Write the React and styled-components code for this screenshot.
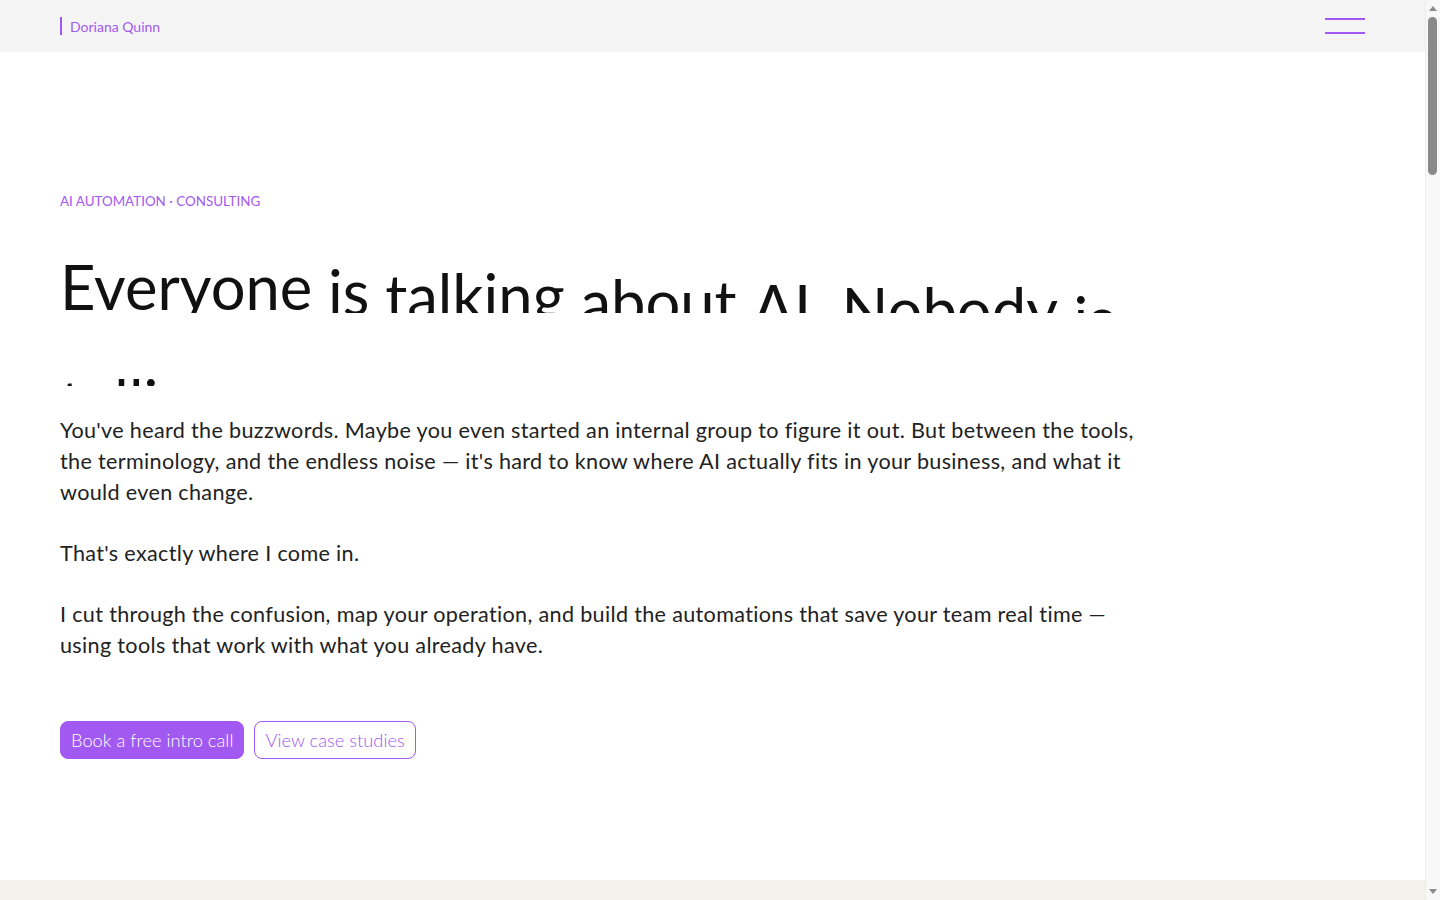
import styled, { createGlobalStyle } from "styled-components";

const GlobalStyle = createGlobalStyle`
    * {
        box-sizing: border-box;
    }

    html, body {
        margin: 0;
        padding: 0;
        background: #fff;
    }

    body {
        font-family: Lato, "Open Sans", sans-serif;
        color: #1a1a1a;
    }
`

const purple = "#a259f2";

const Page = styled.div`
    width: calc(100% - 15px);
`

const Nav = styled.header`
    height: 52px;
    background: #f5f5f5;
    display: flex;
    align-items: center;
    justify-content: space-between;
    padding: 0 60px;
`

const Brand = styled.a`
    display: flex;
    align-items: center;
    height: 18px;
    border-left: 2px solid ${purple};
    padding-left: 8px;
    color: ${purple};
    font-size: 14px;
    font-weight: 400;
    text-decoration: none;
`

const Burger = styled.button`
    width: 40px;
    height: 16px;
    padding: 0;
    border: none;
    background: transparent;
    display: flex;
    flex-direction: column;
    justify-content: space-between;
    cursor: pointer;
`

const BurgerLine = styled.span`
    display: block;
    height: 2px;
    width: 100%;
    background: ${purple};
`

const Hero = styled.section`
    min-height: 828px;
    padding: 142px 60px 0 60px;
`

const Content = styled.div`
    max-width: 1080px;
`

const Eyebrow = styled.p`
    margin: 0;
    color: ${purple};
    font-size: 13.4px;
    line-height: 14px;
    letter-spacing: 0;
    text-transform: uppercase;
`

const Heading = styled.h1`
    margin: 31px 0 29px 0;
    font-size: 61.5px;
    font-weight: 400;
    line-height: 73.6px;
    color: #111;
`

const WordMask = styled.span`
    display: inline-block;
    vertical-align: top;
    height: 73.6px;
    overflow: hidden;
`

const WordInner = styled.span`
    display: inline-block;
    transform: translateY(${p => p.$shift}px);
`

const Paragraph = styled.p`
    margin: 0 0 30px 0;
    font-size: 21.6px;
    font-weight: 400;
    line-height: 31px;
    letter-spacing: 0.015em;
    color: #222;
`

const Actions = styled.div`
    display: flex;
    gap: 10px;
    margin-top: 60px;
`

const Button = styled.a`
    display: inline-flex;
    align-items: center;
    height: 38px;
    padding: 0 10px;
    border-radius: 8px;
    border: 1px solid ${purple};
    background: ${purple};
    color: #fff;
    font-size: 18.3px;
    font-weight: 300;
    text-decoration: none;
    cursor: pointer;
`

const GhostButton = styled(Button)`
    background: #fff;
    color: ${purple};
`

const NextSection = styled.section`
    background: #f3f2ec;
    height: 640px;
`

/* stand-in for the browser's classic scrollbar in the reference */
const ScrollTrack = styled.div`
    position: fixed;
    top: 0;
    right: 0;
    width: 15px;
    height: 100vh;
    background: #f8f8f8;
    border-left: 1px solid #ececec;
`

const ScrollArrow = styled.div`
    position: absolute;
    left: 3px;
    ${p => (p.$down ? "bottom: 6px;" : "top: 6px;")}
    width: 0;
    height: 0;
    border-left: 4px solid transparent;
    border-right: 4px solid transparent;
    ${p => (p.$down ? "border-top: 5px solid #8a8a8a;" : "border-bottom: 5px solid #8a8a8a;")}
`

const ScrollThumb = styled.div`
    position: absolute;
    top: 17px;
    left: 2px;
    width: 9px;
    height: 158px;
    border-radius: 5px;
    background: #8a8a8a;
`

const words = "Everyone is talking about AI. Nobody is telling you what to actually do with it.".split(" ");
const baselines = [72, 77, 81, 87, 92, 95, 104, 113];
const naturalBaseline = 61;

const App = () => {

    return (
        <>
            <GlobalStyle />
            <Page>
                <Nav>
                    <Brand href="#">Doriana Quinn</Brand>
                    <Burger aria-label="Menu">
                        <BurgerLine />
                        <BurgerLine />
                    </Burger>
                </Nav>
                <Hero>
                    <Content>
                        <Eyebrow>AI Automation · Consulting</Eyebrow>
                        <Heading>
                            {words.map((w, i) => (
                                <span key={i}>
                                    <WordMask>
                                        <WordInner $shift={(baselines[i] ?? 160) - naturalBaseline}>{w}</WordInner>
                                    </WordMask>
                                    {i < words.length - 1 ? " " : ""}
                                </span>
                            ))}
                        </Heading>
                        <Paragraph>You've heard the buzzwords. Maybe you even started an internal group to figure it out. But between the tools, the terminology, and the endless noise — it's hard to know where AI actually fits in your business, and what it would even change.</Paragraph>
                        <Paragraph>That's exactly where I come in.</Paragraph>
                        <Paragraph>I cut through the confusion, map your operation, and build the automations that save your team real time — using tools that work with what you already have.</Paragraph>
                        <Actions>
                            <Button href="#">Book a free intro call</Button>
                            <GhostButton href="#">View case studies</GhostButton>
                        </Actions>
                    </Content>
                </Hero>
                <NextSection />
            </Page>
            <ScrollTrack>
                <ScrollArrow />
                <ScrollThumb />
                <ScrollArrow $down />
            </ScrollTrack>
        </>
    );
}

export default App
